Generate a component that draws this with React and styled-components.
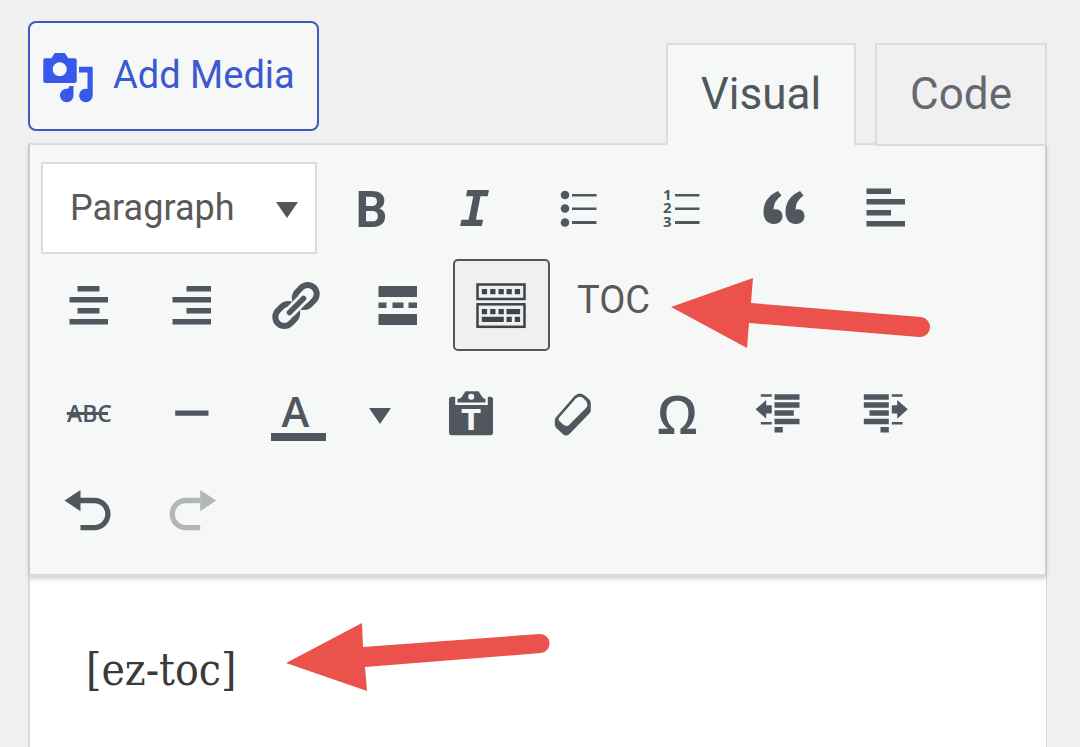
import React, { useState } from 'react';
import styled, { createGlobalStyle, css } from 'styled-components';

const App = () => {
  const [tab, setTab] = useState('visual');
  const [sinkOpen, setSinkOpen] = useState(true);

  return (
    <>
      <GlobalStyle />
      <Page>
        <Header>
          <MediaButton type="button">
            <MediaIcon />
            Add Media
          </MediaButton>
          <Tabs role="tablist">
            <Tab type="button" role="tab" aria-selected={tab === 'visual'} $active={tab === 'visual'} onClick={() => setTab('visual')}>Visual</Tab>
            <Tab type="button" role="tab" aria-selected={tab === 'code'} $active={tab === 'code'} onClick={() => setTab('code')}>Code</Tab>
          </Tabs>
        </Header>

        <Editor>
          <Toolbar>
            <Row>
              <FormatBox>
                <Format aria-label="Format" defaultValue="Paragraph">
                  <option>Paragraph</option>
                  <option>Heading 1</option>
                  <option>Heading 2</option>
                  <option>Preformatted</option>
                </Format>
                <Caret />
              </FormatBox>
              <Tool type="button" aria-label="Bold"><BoldMark>B</BoldMark></Tool>
              <Tool type="button" aria-label="Italic"><ItalicMark>I</ItalicMark></Tool>
              <Tool type="button" aria-label="Bulleted list"><BulletIcon /></Tool>
              <Tool type="button" aria-label="Numbered list"><NumberIcon /></Tool>
              <Tool type="button" aria-label="Blockquote"><QuoteIcon /></Tool>
              <Tool type="button" aria-label="Align left"><AlignLeftIcon /></Tool>
              <Tool type="button" aria-label="Align center"><AlignCenterIcon /></Tool>
              <Tool type="button" aria-label="Align right"><AlignRightIcon /></Tool>
              <Tool type="button" aria-label="Insert link"><LinkIcon /></Tool>
              <Tool type="button" aria-label="Read more tag"><MoreIcon /></Tool>
              <Tool type="button" aria-label="Toolbar toggle" aria-pressed={sinkOpen} $active={sinkOpen} onClick={() => setSinkOpen(!sinkOpen)}>
                <SinkIcon />
              </Tool>
              <TocBox>
                <TocButton type="button">TOC</TocButton>
                <TocArrow viewBox="0 0 260 72" aria-hidden="true">
                  <path d="M0 30 82 1 80 26 250 40A9.500 9.500 0 0 1 248 60L78 46 76 71Z" />
                </TocArrow>
              </TocBox>
            </Row>

            {sinkOpen && (
              <Row>
                <Tool type="button" aria-label="Strikethrough"><StrikeIcon /></Tool>
                <Tool type="button" aria-label="Horizontal line"><RuleIcon /></Tool>
                <Split>
                  <ColorButton type="button" aria-label="Text color">
                    <ColorMark>A</ColorMark>
                    <ColorBar />
                  </ColorButton>
                  <OpenButton type="button" aria-label="Choose color"><Caret /></OpenButton>
                </Split>
                <Tool type="button" aria-label="Paste as text"><PasteIcon /></Tool>
                <Tool type="button" aria-label="Clear formatting"><EraserIcon /></Tool>
                <Tool type="button" aria-label="Special character"><OmegaMark>Ω</OmegaMark></Tool>
                <Tool type="button" aria-label="Decrease indent"><OutdentIcon /></Tool>
                <Tool type="button" aria-label="Increase indent"><IndentIcon /></Tool>
                <Tool type="button" aria-label="Undo"><UndoIcon /></Tool>
                <Tool type="button" aria-label="Redo" disabled><RedoIcon /></Tool>
              </Row>
            )}
          </Toolbar>

          <Content>
            <Text>[ez-toc]</Text>
            <TextArrow viewBox="0 0 264 70" aria-hidden="true">
              <path d="M0 41 76 1 77 25 253 12A9.500 9.500 0 0 1 255 31L79 45 81 69Z" />
            </TextArrow>
          </Content>
        </Editor>
      </Page>
    </>
  );
};

export default App;

/* icons */

const Icon = ({ left = 1, children }) => (
  <IconSvg viewBox={`${left} 0 60 60`} aria-hidden="true">{children}</IconSvg>
);

const Caret = () => (
  <CaretSvg viewBox="0 0 22 16" aria-hidden="true"><path d="M0 0H22L11 16Z" /></CaretSvg>
);

const MediaIcon = () => (
  <MediaSvg viewBox="0 0 50 50" aria-hidden="true">
    <path fillRule="evenodd" d="M2 5.300H8.300L11.700 0H21.700L25.300 5.300H31.700Q33.700 5.300 33.700 7.300V28Q33.700 30 31.700 30H2.300Q.3 30 .3 28V7.300Q.3 5.300 2 5.300ZM16.700 9.300a7 7 0 1 0 0 14a7 7 0 1 0 0-14Z" />
    <path d="M36 13.700H49.700V42.500A6.800 6.800 0 1 1 44.500 35.900V19.500H36Z" />
    <path d="M25 35.800L26.500 33H30.500V42.500A6.800 6.800 0 1 1 25 35.800Z" />
  </MediaSvg>
);

const BulletIcon = () => (
  <Icon left={0}>
    <circle cx="17" cy="17" r="4.300" />
    <circle cx="17" cy="30.500" r="4.300" />
    <circle cx="17" cy="44.500" r="4.300" />
    <path d="M24 16H48.500V18.500H24ZM24 29.500H48.500V32H24ZM24 43H48.500V46H24Z" />
  </Icon>
);

const NumberIcon = () => (
  <Icon left={0}>
    <IconText x="12" y="22" $size={15}>1</IconText>
    <IconText x="12" y="35" $size={15}>2</IconText>
    <IconText x="12" y="49" $size={15}>3</IconText>
    <path d="M24 16H48.500V18.500H24ZM24 29.500H48.500V32H24ZM24 43H48.500V46H24Z" />
  </Icon>
);

const quote = 'M24 13 27.500 17.500Q19.500 23 19.500 31.500C25 30 28.500 33.500 28.500 38C28.500 43 24.500 46 20 46C13 46 9.500 41 9.500 34C9.500 24 15 17 24 13Z';

const QuoteIcon = () => (
  <Icon left={0}>
    <path d={quote} />
    <path d={quote} transform="translate(22 0)" />
  </Icon>
);

const AlignLeftIcon = () => (
  <Icon><path d="M10.500 10.500H35V16H10.500ZM10.500 21H49V26.500H10.500ZM10.500 32H35V37.500H10.500ZM10.500 43H49V48.500H10.500Z" /></Icon>
);

const AlignCenterIcon = () => (
  <Icon><path d="M18.500 11H40.500V16.500H18.500ZM10.500 22H49V27.500H10.500ZM18.500 33H40.500V38.500H18.500ZM10.500 44H49V49.500H10.500Z" /></Icon>
);

const AlignRightIcon = () => (
  <Icon><path d="M24.500 11H49V16.500H24.500ZM10.500 22H49V27.500H10.500ZM24.500 33H49V38.500H24.500ZM10.500 44H49V49.500H10.500Z" /></Icon>
);

const LinkIcon = () => (
  <Icon>
    <g fill="none" stroke="currentColor" strokeWidth="6">
      <rect x="29" y="12" width="23.500" height="18" rx="9" transform="rotate(-45 40.750 21)" />
      <rect x="9.500" y="31" width="23.500" height="18" rx="9" transform="rotate(-45 21.250 40)" />
      <path d="M24.500 37.500 38.500 23.500" stroke="#f6f8f8" strokeWidth="11" />
      <path d="M24.500 37.500 38.500 23.500" strokeLinecap="round" strokeWidth="5.500" />
    </g>
  </Icon>
);

const MoreIcon = () => (
  <Icon><path d="M10.500 11H49V22H10.500ZM10.500 27.500H18.500V33H10.500ZM24.500 27.500H35.500V33H24.500ZM40.500 27.500H49V33H40.500ZM10.500 39H49V50H10.500Z" /></Icon>
);

const SinkIcon = () => (
  <Icon>
    <g fill="none" stroke="currentColor" strokeWidth="2.500">
      <rect x="6.500" y="9.500" width="47" height="14.500" />
      <rect x="6.500" y="29.300" width="47" height="22.500" />
    </g>
    <path d="M10.800 14h5.300v5.300h-5.300zM19.200 14h5.300v5.300h-5.300zM27.500 14h5.300v5.300h-5.300zM35.500 14h5.300v5.300h-5.300zM43.800 14h5.300v5.300h-5.300z" />
    <path d="M10.800 34h5.300v5.300h-5.300zM19.200 34h5.300v5.300h-5.300zM27.500 34h5.300v5.300h-5.300zM35.500 34h13.600v5.300h-13.600z" />
    <path d="M10.800 41.800h22v5.300h-22zM35.500 41.800h5.300v5.300h-5.300zM43.800 41.800h5.300v5.300h-5.300z" />
  </Icon>
);

const StrikeIcon = () => (
  <Icon>
    <IconText x="8" y="39" $size={23} $weight={600}>ABC</IconText>
    <path d="M7.800 29H49V32H7.800Z" />
  </Icon>
);

const RuleIcon = () => (
  <Icon><path d="M13.200 27.500H46.500V32.800H13.200Z" /></Icon>
);

const PasteIcon = () => (
  <Icon>
    <path d="M10.500 13.700H14.200V22H46.800V13.700H49.500Q52 13.700 52 16.200V50Q52 52.300 49.500 52.300H10.500Q8 52.300 8 50V16.200Q8 13.700 10.500 13.700Z" />
    <path fillRule="evenodd" d="M16.500 19.500V16L20 15L24.500 8.300H37.500L42 15L44.500 16V19.500ZM30.200 10.700a3 3 0 1 0 0 6a3 3 0 1 0 0-6Z" />
    <PasteText x="30" y="47">T</PasteText>
  </Icon>
);

const EraserIcon = () => (
  <Icon>
    <path
      fillRule="evenodd"
      d="M10.800 37.500Q10.800 35.500 12 34.300L30.500 13Q35 8.500 40 12L44 15.200Q46.800 17.500 46.800 20.500V27Q46.800 29 45.300 30.500L25.500 51Q22 54 19 51.300L12.800 45.500Q10.800 43.500 10.800 41.500ZM15 34.800Q14 36.500 15.300 38L19.500 41.800Q22.500 44 25 42L42 25Q44.500 22.500 42.500 18.500L38.500 14.500Q35 12.500 32 15.300Z"
    />
  </Icon>
);

const OutdentIcon = () => (
  <Icon>
    <path d="M24.500 11.300H49.500V16.700H24.500ZM24.500 19.300H49.500V24.700H24.500ZM24.500 27.300H43.800V32.700H24.500ZM24.500 35.800H49.500V41.300H24.500ZM24.500 44H32.800V49.500H24.500Z" />
    <path d="M10.800 11.300H21.800V13.800H10.800ZM10.800 39H21.800V41.500H10.800Z" />
    <path d="M5.500 26.300 16.200 17V22.300H21.800V30.500H16.200V35.700Z" />
  </Icon>
);

const IndentIcon = () => (
  <Icon>
    <path d="M10.800 11.300H35.800V16.700H10.800ZM10.800 19.300H35.800V24.700H10.800ZM16.500 27.300H35.800V32.700H16.500ZM10.800 35.800H35.800V41.300H10.800ZM27.500 44H35.800V49.500H27.500Z" />
    <path d="M38.800 11.300H49.500V13.800H38.800ZM38.800 39H49.500V41.500H38.800Z" />
    <path d="M54.800 26.300 44.200 17V22.300H38.800V30.500H44.200V35.700Z" />
  </Icon>
);

const UndoIcon = () => (
  <Icon>
    <path d="M5.500 20.500 21.500 10V31.300Z" />
    <path d="M21 20.500H35.300A13.600 13.600 0 0 1 35.300 47.700H21.500" fill="none" stroke="currentColor" strokeWidth="5.300" />
  </Icon>
);

const RedoIcon = () => (
  <Icon>
    <path d="M54.200 20.500 38.200 10V31.300Z" />
    <path d="M38.700 20.500H23.800A13.600 13.600 0 0 0 23.800 47.700H38.200" fill="none" stroke="currentColor" strokeWidth="5.300" />
  </Icon>
);

/* styles */

const GlobalStyle = createGlobalStyle`
  * {
    box-sizing: border-box;
  }

  body {
    margin: 0;
    background: #f0f0f0;
    font-family: Roboto, "Liberation Sans", sans-serif;
    color: #50575e;
  }

  button, select {
    font-family: inherit;
    color: inherit;
    margin: 0;
    cursor: pointer;
  }
`;

const Page = styled.div`
  display: flex;
  flex-direction: column;
  min-height: 100vh;
  padding: 21px 33px 0 28px;
`;

const Header = styled.div`
  display: flex;
  justify-content: space-between;
  align-items: flex-start;
  gap: 20px;
`;

const MediaButton = styled.button`
  display: flex;
  align-items: center;
  gap: 20px;
  height: 110px;
  margin-bottom: 12px;
  padding: 0 22px 2px 13px;
  background: #f6f8f8;
  border: 2px solid #4059b8;
  border-radius: 8px;
  color: #3d59cf;
  font-size: 38px;
  white-space: nowrap;
`;

const MediaSvg = styled.svg`
  width: 50px;
  height: 50px;
  margin-top: 6px;
  fill: #3858e9;
`;

const Tabs = styled.div`
  display: flex;
  align-self: flex-end;
  gap: 19px;
  margin-bottom: -3px;
  position: relative;
  z-index: 2;
`;

const Tab = styled.button`
  height: 103px;
  padding: 0 33px 2px;
  background: ${({ $active }) => ($active ? '#f6f8f8' : '#f0f0f0')};
  border: 2px solid #dcdcde;
  border-bottom-color: ${({ $active }) => ($active ? '#f6f8f8' : '#dcdcde')};
  color: ${({ $active }) => ($active ? '#50575e' : '#646970')};
  font-size: 44px;
`;

const Editor = styled.div`
  display: flex;
  flex-direction: column;
  flex: 1;
  background: #fff;
`;

const Toolbar = styled.div`
  display: flex;
  flex-direction: column;
  gap: 16px;
  padding: 17px 11px 18px;
  background: #f6f8f8;
  border: 2px solid #c9cbcd;
  border-top-color: #dcdcde;
  border-bottom: 3px solid #d8dadb;
  box-shadow: 0 3px 5px -1px rgba(0, 0, 0, 0.18);
  position: relative;
`;

const Row = styled.div`
  display: flex;
  flex-wrap: wrap;
  gap: 5px 6px;
`;

const toolBase = css`
  display: flex;
  align-items: center;
  justify-content: center;
  height: 92px;
  padding: 0;
  background: none;
  border: 2px solid transparent;
  border-radius: 5px;
`;

const Tool = styled.button`
  ${toolBase}
  width: 97px;

  ${({ $active }) => $active && css`
    background: #f0f0f0;
    border-color: #50575e;
    color: #3c434a;
  `}

  &:disabled {
    color: #b3b6b8;
    cursor: default;
  }
`;

const FormatBox = styled.div`
  display: grid;
  align-items: center;
  width: 276px;
  height: 92px;
  background: #fff;
  border: 2px solid #dcdcde;

  > * {
    grid-area: 1 / 1;
  }

  > svg {
    justify-self: end;
    margin-right: 17px;
    pointer-events: none;
  }
`;

const Format = styled.select`
  appearance: none;
  width: 100%;
  height: 88px;
  padding: 0 50px 0 27px;
  background: none;
  border: 0;
  color: #595959;
  font-size: 36px;
`;

const CaretSvg = styled.svg`
  width: 22px;
  height: 16px;
  margin-top: 4px;
  fill: #50575e;
`;

const IconSvg = styled.svg`
  width: 60px;
  height: 60px;
  fill: currentColor;
`;

const IconText = styled.text`
  font-family: "Open Sans", sans-serif;
  font-size: ${({ $size }) => $size}px;
  font-weight: ${({ $weight }) => $weight || 700};
`;

const PasteText = styled.text`
  fill: #f6f8f8;
  font-family: "DejaVu Sans", sans-serif;
  font-size: 28px;
  font-weight: 700;
  text-anchor: middle;
`;

const BoldMark = styled.span`
  margin-top: 4px;
  font-size: 50px;
  font-weight: 700;
`;

const ItalicMark = styled.span`
  margin-top: 2px;
  font-family: "DejaVu Sans Mono", monospace;
  font-size: 50px;
  font-style: italic;
  font-weight: 700;
`;

const OmegaMark = styled.span`
  font-family: "Open Sans", "Noto Sans", sans-serif;
  font-size: 52px;
  font-weight: 600;
`;

const TocBox = styled.div`
  position: relative;
`;

const TocButton = styled.button`
  ${toolBase}
  width: 115px;
  padding-bottom: 11px;
  color: #595959;
  font-size: 38px;
`;

/* callout arrows */
const arrow = css`
  fill: #ea524b;
  pointer-events: none;
`;

const TocArrow = styled.svg`
  ${arrow}
  position: absolute;
  left: 100%;
  top: 18px;
  width: 260px;
  height: 72px;
`;

const Split = styled.div`
  display: flex;
  width: 170px;
`;

const ColorButton = styled.button`
  ${toolBase}
  flex-direction: column;
  width: 103px;
  padding-top: 4px;
  font-family: "Open Sans", sans-serif;
  font-size: 42px;
  font-weight: 600;
  line-height: 44px;
`;

const ColorMark = styled.span`
  padding-right: 6px;
`;

const ColorBar = styled.span`
  width: 55px;
  height: 8px;
  background: #50575e;
`;

const OpenButton = styled.button`
  ${toolBase}
  width: 60px;
  padding-top: 2px;
`;

const Content = styled.div`
  display: flex;
  flex: 1;
  align-items: flex-start;
  gap: 50px;
  padding: 45px 56px;
  border-left: 2px solid #dcdcde;
  border-right: 1px solid #dcdcde;
`;

const Text = styled.p`
  margin: 20px 0 0;
  color: #3a3a3a;
  font-family: "DejaVu Serif Condensed", "DejaVu Serif", serif;
  font-size: 44px;
  line-height: 56px;
`;

const TextArrow = styled.svg`
  ${arrow}
  width: 264px;
  height: 70px;
`;
